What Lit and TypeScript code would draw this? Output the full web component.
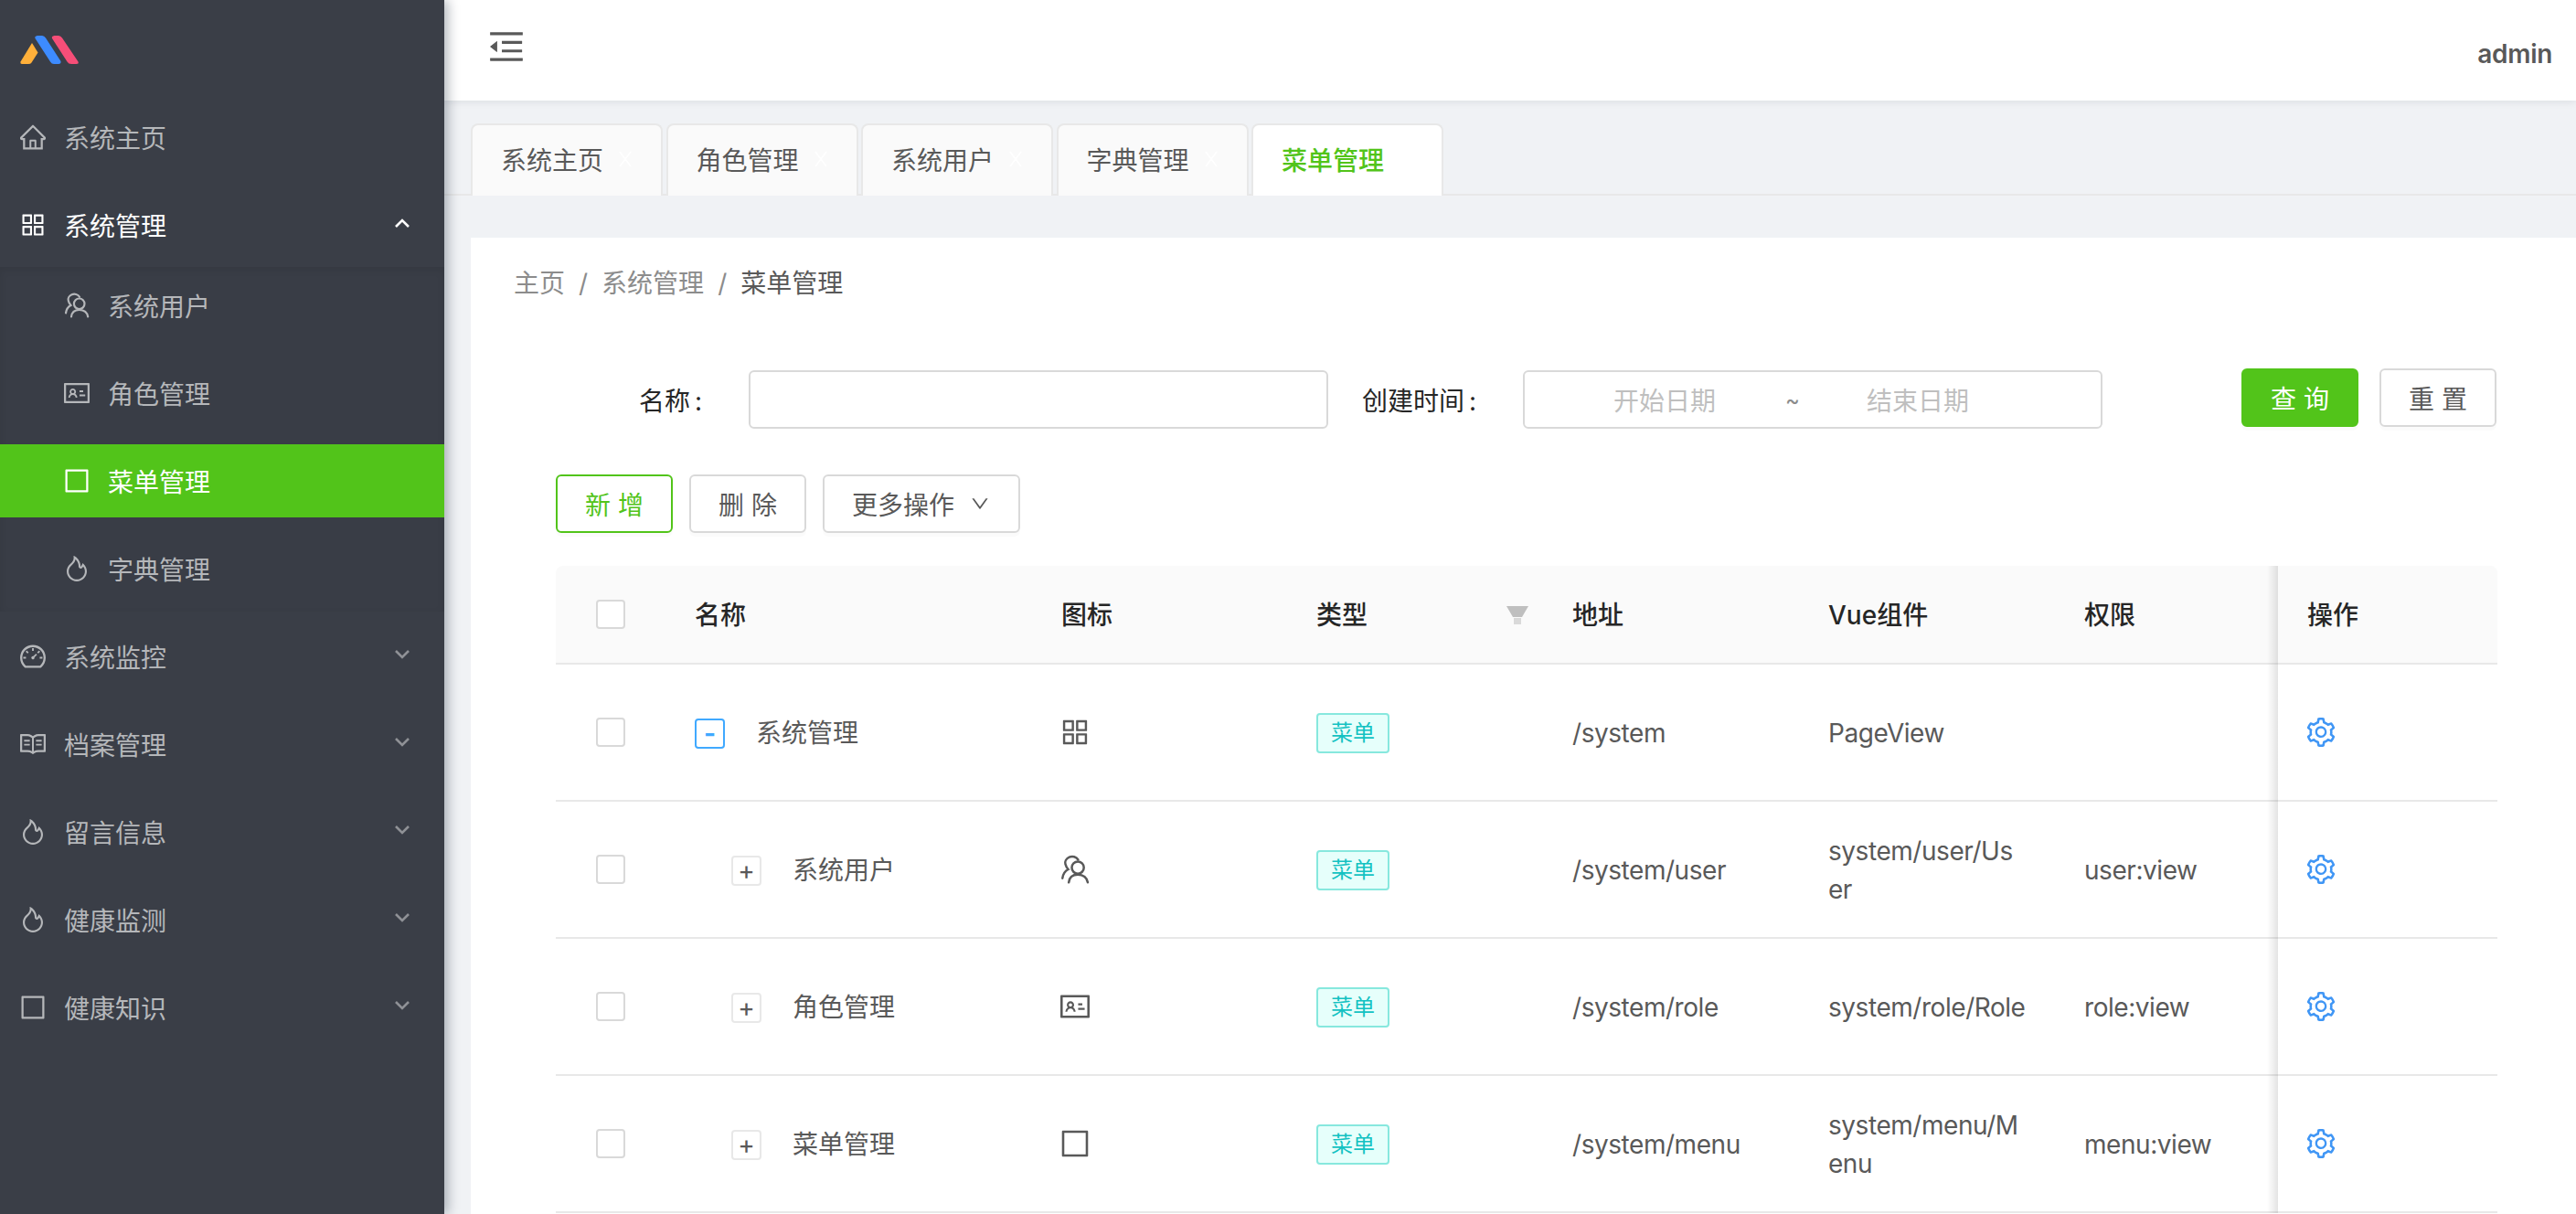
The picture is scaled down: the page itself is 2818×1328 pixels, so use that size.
import { LitElement, html, css, svg } from "lit";
import { customElement } from "lit/decorators.js";

// paths de los iconos (viewBox 64 64 896 896)
const P: Record<string, string> = {
  home: "M946.5 505L560.1 118.8l-25.9-25.9a31.5 31.5 0 0 0-44.4 0L77.5 505a63.9 63.9 0 0 0-18.8 46c.4 35.2 29.7 63.3 64.9 63.3h42.5V940h691.8V614.3h43.4c17.1 0 33.2-6.7 45.3-18.8a63.6 63.6 0 0 0 18.7-45.3c0-17-6.7-33.1-18.8-45.2zM568 868H456V664h112v204zm217.9-325.7V868H632V640c0-22.1-17.9-40-40-40H432c-22.1 0-40 17.9-40 40v228H238.1V542.3h-96l370-369.7 23.1 23.1L882 542.3h-96.1z",
  appstore: "M464 144H160c-8.8 0-16 7.2-16 16v304c0 8.8 7.2 16 16 16h304c8.8 0 16-7.2 16-16V160c0-8.8-7.2-16-16-16zm-52 268H212V212h200v200zm452-268H560c-8.8 0-16 7.2-16 16v304c0 8.8 7.2 16 16 16h304c8.8 0 16-7.2 16-16V160c0-8.8-7.2-16-16-16zm-52 268H612V212h200v200zM464 544H160c-8.8 0-16 7.2-16 16v304c0 8.8 7.2 16 16 16h304c8.8 0 16-7.2 16-16V560c0-8.8-7.2-16-16-16zm-52 268H212V612h200v200zm452-268H560c-8.8 0-16 7.2-16 16v304c0 8.8 7.2 16 16 16h304c8.8 0 16-7.2 16-16V560c0-8.8-7.2-16-16-16zm-52 268H612V612h200v200z",
  idcard: "M928 160H96c-17.7 0-32 14.3-32 32v640c0 17.7 14.3 32 32 32h832c17.7 0 32-14.3 32-32V192c0-17.7-14.3-32-32-32zm-40 632H136V232h752v560zM610.3 476h123.4c1.3 0 2.3-3.6 2.3-8v-48c0-4.4-1-8-2.3-8H610.3c-1.3 0-2.3 3.6-2.3 8v48c0 4.4 1 8 2.3 8zm4.8 144h185.7c3.9 0 7.1-3.6 7.1-8v-48c0-4.4-3.2-8-7.1-8H615.1c-3.9 0-7.1 3.6-7.1 8v48c0 4.4 3.2 8 7.1 8zM224 673h43.9c4.2 0 7.6-3.3 7.9-7.5 3.8-50.5 46-90.5 97.2-90.5s93.4 40 97.2 90.5c.3 4.2 3.7 7.5 7.9 7.5H522a8 8 0 0 0 8-8.4c-2.8-53.3-32-99.7-74.6-126.1a111.8 111.8 0 0 0 29.1-75.5c0-61.9-49.9-112-111.4-112s-111.4 50.1-111.4 112c0 29.1 11 55.5 29.1 75.5a158.09 158.09 0 0 0-74.6 126.1c-.4 4.6 3.2 8.4 7.8 8.4zm149-262c28.5 0 51.7 23.3 51.7 52s-23.2 52-51.7 52-51.7-23.3-51.7-52 23.2-52 51.7-52z",
  border: "M880 112H144c-17.7 0-32 14.3-32 32v736c0 17.7 14.3 32 32 32h736c17.7 0 32-14.3 32-32V144c0-17.7-14.3-32-32-32zm-40 728H184V184h656v656z",
  fire: "M834.1 469.2A347.49 347.49 0 0 0 751.2 354l-29.1-26.7a7.09 7.09 0 0 0-11.4 2.9l-13 37.3c-8.1 23.4-23 47.3-44.1 70.8-1.4 1.5-3 1.9-4.1 2-1.1.1-2.8-.1-4.3-1.5-1.4-1.2-2.1-3-2-4.8 3.7-60.2-14.3-128.1-53.7-202C555.3 171 510 123.1 453.4 89.7l-41.3-24.3c-5.4-3.2-12.3 1-12 7.3l2.2 48c1.5 32.8-2.3 61.8-11.3 85.9-11 29.5-26.8 56.9-47 81.5a295.64 295.64 0 0 1-47.5 46.1 352.6 352.6 0 0 0-100.3 121.5A347.75 347.75 0 0 0 160 610c0 47.2 9.3 92.9 27.7 136a349.4 349.4 0 0 0 75.5 110.9c32.4 32 70 57.2 111.9 74.7C418.5 949.8 464.5 959 512 959s93.5-9.2 136.9-27.3A348.6 348.6 0 0 0 760.8 857c32.4-32 57.8-69.4 75.5-110.9a344.2 344.2 0 0 0 27.7-136c0-48.8-10-96.2-29.9-140.9zM713 808.5c-53.7 53.2-125 82.4-201 82.4s-147.3-29.2-201-82.4c-53.5-53.1-83-123.5-83-198.4 0-43.5 9.8-85.2 29.1-124 18.8-37.9 46.8-71.8 80.8-97.9a349.6 349.6 0 0 0 58.6-56.8c25-30.5 44.6-64.5 58.2-101a240 240 0 0 0 12.1-46.5c24.1 22.2 44.3 49 61.2 80.4 33.4 62.6 48.8 118.3 45.8 165.7a74.01 74.01 0 0 0 24.4 59.8 73.36 73.36 0 0 0 53.4 18.8c19.7-1 37.8-9.7 51-24.4 13.3-14.9 24.8-30.1 34.4-45.6 14 17.9 25.7 37.4 35 58.4 15.9 35.8 24 73.9 24 113.2 0 74.9-29.5 145.4-83 198.4z",
  dashboard: "M924.8 385.6a446.7 446.7 0 0 0-96-142.4 446.7 446.7 0 0 0-142.4-96C631.1 123.8 572.5 112 512 112s-119.1 11.8-174.4 35.2a446.7 446.7 0 0 0-142.4 96 446.7 446.7 0 0 0-96 142.4C75.8 440.9 64 499.5 64 560c0 132.7 58.3 257.7 159.9 343.1l1.7 1.4c5.8 4.8 13.1 7.5 20.6 7.5h531.7c7.5 0 14.8-2.7 20.6-7.5l1.7-1.4C901.7 817.7 960 692.7 960 560c0-60.5-11.9-119.1-35.2-174.4zM761.4 836H262.6A371.12 371.12 0 0 1 140 560c0-99.4 38.7-192.8 109-263 70.3-70.3 163.7-109 263-109 99.4 0 192.8 38.7 263 109 70.3 70.3 109 163.7 109 263 0 105.6-44.5 205.5-122.6 276zM623.5 421.5a8.03 8.03 0 0 0-11.3 0L527.7 506c-18.7-5-39.4-.2-54.1 14.5a55.95 55.95 0 0 0 0 79.2 55.95 55.95 0 0 0 79.2 0 55.87 55.87 0 0 0 14.5-54.1l84.5-84.5c3.1-3.1 3.1-8.2 0-11.3l-28.3-28.3zM490 320h44c4.4 0 8-3.6 8-8v-80c0-4.4-3.6-8-8-8h-44c-4.4 0-8 3.6-8 8v80c0 4.4 3.6 8 8 8zm260 218v44c0 4.4 3.6 8 8 8h80c4.4 0 8-3.6 8-8v-44c0-4.4-3.6-8-8-8h-80c-4.4 0-8 3.6-8 8zm12.7-197.2l-31.1-31.1a8.03 8.03 0 0 0-11.3 0l-56.6 56.6a8.03 8.03 0 0 0 0 11.3l31.1 31.1c3.1 3.1 8.2 3.1 11.3 0l56.6-56.6c3.1-3.1 3.1-8.2 0-11.3zm-458.6-31.1a8.03 8.03 0 0 0-11.3 0l-31.1 31.1a8.03 8.03 0 0 0 0 11.3l56.6 56.6c3.1 3.1 8.2 3.1 11.3 0l31.1-31.1c3.1-3.1 3.1-8.2 0-11.3l-56.6-56.6zM262 530h-80c-4.4 0-8 3.6-8 8v44c0 4.4 3.6 8 8 8h80c4.4 0 8-3.6 8-8v-44c0-4.4-3.6-8-8-8z",
  read: "M928 161H699.2c-49.1 0-97.1 14.1-138.4 40.7L512 233l-48.8-31.3A255.2 255.2 0 0 0 324.8 161H96c-17.7 0-32 14.3-32 32v568c0 17.7 14.3 32 32 32h228.8c49.1 0 97.1 14.1 138.4 40.7l44.4 28.6c1.3.8 2.8 1.3 4.3 1.3s3-.4 4.3-1.3l44.4-28.6C602 807.1 650.1 793 699.2 793H928c17.7 0 32-14.3 32-32V193c0-17.7-14.3-32-32-32zM324.8 721H136V233h188.8c35.4 0 69.8 10.1 99.5 29.2l48.8 31.3 6.9 4.5v462c-47.6-25.6-100.8-39-155.2-39zm563.2 0H699.2c-54.4 0-107.6 13.4-155.2 39V298l6.9-4.5 48.8-31.3c29.7-19.1 64.1-29.2 99.5-29.2H888v488zM396.9 361H211.1c-3.9 0-7.1 3.4-7.1 7.5v45c0 4.1 3.2 7.5 7.1 7.5h185.7c3.9 0 7.1-3.4 7.1-7.5v-45c.1-4.1-3.1-7.5-7-7.5zm223.1 7.5v45c0 4.1 3.2 7.5 7.1 7.5h185.7c3.9 0 7.1-3.4 7.1-7.5v-45c0-4.1-3.2-7.5-7.1-7.5H627.1c-3.9 0-7.1 3.4-7.1 7.5zM396.9 501H211.1c-3.9 0-7.1 3.4-7.1 7.5v45c0 4.1 3.2 7.5 7.1 7.5h185.7c3.9 0 7.1-3.4 7.1-7.5v-45c.1-4.1-3.1-7.5-7-7.5zm416 0H627.1c-3.9 0-7.1 3.4-7.1 7.5v45c0 4.1 3.2 7.5 7.1 7.5h185.7c3.9 0 7.1-3.4 7.1-7.5v-45c.1-4.1-3.1-7.5-7-7.5z",
  setting: "M924.8 625.7l-65.5-56c3.1-19 4.7-38.4 4.7-57.8s-1.6-38.8-4.7-57.8l65.5-56a32.03 32.03 0 0 0 9.3-35.2l-.9-2.6a443.74 443.74 0 0 0-79.7-137.9l-1.8-2.1a32.12 32.12 0 0 0-35.1-9.5l-81.3 28.9c-30-24.6-63.5-44-99.7-57.6l-15.7-85a32.05 32.05 0 0 0-25.8-25.7l-2.7-.5c-52.1-9.4-106.9-9.4-159 0l-2.7.5a32.05 32.05 0 0 0-25.8 25.7l-15.8 85.4a351.86 351.86 0 0 0-99 57.4l-81.9-29.1a32 32 0 0 0-35.1 9.5l-1.8 2.1a446.02 446.02 0 0 0-79.7 137.9l-.9 2.6c-4.5 12.5-.8 26.5 9.3 35.2l66.3 56.6c-3.1 18.8-4.6 38-4.6 57.1 0 19.2 1.5 38.4 4.6 57.1L99 625.5a32.03 32.03 0 0 0-9.3 35.2l.9 2.6c18.1 50.4 44.9 96.9 79.7 137.9l1.8 2.1a32.12 32.12 0 0 0 35.1 9.5l81.9-29.1c29.8 24.5 63.1 43.9 99 57.4l15.8 85.4a32.05 32.05 0 0 0 25.8 25.7l2.7.5a449.4 449.4 0 0 0 159 0l2.7-.5a32.05 32.05 0 0 0 25.8-25.7l15.7-85a350 350 0 0 0 99.7-57.6l81.3 28.9a32 32 0 0 0 35.1-9.5l1.8-2.1c34.8-41.1 61.6-87.5 79.7-137.9l.9-2.6c4.5-12.3.8-26.3-9.3-35zM788.3 465.9c2.5 15.1 3.8 30.6 3.8 46.1s-1.3 31-3.8 46.1l-6.6 40.1 74.7 63.9a370.03 370.03 0 0 1-42.6 73.6L721 702.8l-31.4 25.8c-23.9 19.6-50.5 35-79.3 45.8l-38.1 14.3-17.9 97a377.5 377.5 0 0 1-85 0l-17.9-97.2-37.8-14.5c-28.5-10.8-55-26.2-78.7-45.7l-31.4-25.9-93.4 33.2c-17-22.9-31.2-47.6-42.6-73.6l75.5-64.5-6.5-40c-2.4-14.9-3.7-30.3-3.7-45.5 0-15.3 1.2-30.6 3.7-45.5l6.5-40-75.5-64.5c11.3-26.1 25.6-50.7 42.6-73.6l93.4 33.2 31.4-25.9c23.7-19.5 50.2-34.9 78.7-45.7l37.9-14.3 17.9-97.2c28.1-3.2 56.8-3.2 85 0l17.9 97 38.1 14.3c28.7 10.8 55.4 26.2 79.3 45.8l31.4 25.8 92.8-32.9c17 22.9 31.2 47.6 42.6 73.6L781.8 426l6.5 39.9zM512 326c-97.2 0-176 78.8-176 176s78.8 176 176 176 176-78.8 176-176-78.8-176-176-176zm79.2 255.2A111.6 111.6 0 0 1 512 614c-29.9 0-58-11.7-79.2-32.8A111.6 111.6 0 0 1 400 502c0-29.9 11.7-58 32.8-79.2C454 401.6 482.1 390 512 390c29.9 0 58 11.6 79.2 32.8A111.6 111.6 0 0 1 624 502c0 29.9-11.7 58-32.8 79.2z",
  fold: "M408 442h480c4.4 0 8-3.6 8-8v-56c0-4.4-3.6-8-8-8H408c-4.4 0-8 3.6-8 8v56c0 4.4 3.6 8 8 8zm-8 204c0 4.4 3.6 8 8 8h480c4.4 0 8-3.6 8-8v-56c0-4.4-3.6-8-8-8H408c-4.4 0-8 3.6-8 8v56zm504-486H120c-4.4 0-8 3.6-8 8v56c0 4.4 3.6 8 8 8h784c4.4 0 8-3.6 8-8v-56c0-4.4-3.6-8-8-8zm0 632H120c-4.4 0-8 3.6-8 8v56c0 4.4 3.6 8 8 8h784c4.4 0 8-3.6 8-8v-56c0-4.4-3.6-8-8-8zM115.4 518.9L271.7 642c5.8 4.6 14.4.5 14.4-6.9V388.9c0-7.4-8.5-11.5-14.4-6.9L115.4 505.1a8.83 8.83 0 0 0 0 13.8z",
  down: "M884 256h-75c-5.1 0-9.9 2.5-12.9 6.6L512 654.2 227.9 262.6c-3-4.1-7.8-6.6-12.9-6.6h-75c-6.5 0-10.3 7.4-6.5 12.7l352.6 486.1c12.8 17.6 39 17.6 51.7 0l352.6-486.1c3.9-5.3.1-12.7-6.4-12.7z",
};

// icono de dos personas, se dibuja con trazos
const team = svg`<g fill="none" stroke="currentColor" stroke-width="2.2" stroke-linecap="round">
  <circle cx="16.7" cy="12.3" r="5.8" />
  <path d="M8 26.5C8.500 22 11.500 19 16.700 19s8.700 3 9.500 7.500" />
  <path d="M17 4.800C15.300 2 11.500 1 8.500 2.300 5.500 3.700 4 6.500 4.800 9c.5 2 1.300 3.500 2.700 5C4.500 15.500 2.500 18.500 2 22.500" />
</g>`;

function icon(name: string, size = 28) {
  if (name === "team") {
    return html`<svg class="ic" width=${size} height=${size} viewBox="0 0 28 28">${team}</svg>`;
  }
  return html`<svg class="ic" width=${size} height=${size} viewBox="64 64 896 896" fill="currentColor"><path d=${P[name]} /></svg>`;
}

@customElement("app-sider")
export class AppSider extends LitElement {
  static styles = css`
    :host {
      display: block;
      width: 486px;
      flex: none;
      height: 100%;
      background: #3a3e47;
      color: #b5b7ba;
      position: relative;
      z-index: 2;
      box-shadow: 4px 0 12px rgba(0, 21, 41, 0.3);
      font-size: 28px;
    }
    .logo {
      height: 110px;
      box-sizing: border-box;
      padding: 39px 0 0 22px;
    }
    .logo svg {
      display: block;
    }
    .item {
      display: flex;
      align-items: center;
      height: 80px;
      padding-left: 22px;
      padding-right: 38px;
      margin-bottom: 16px;
    }
    .item .ic {
      margin-right: 20px;
      flex: none;
    }
    .item.open {
      color: #fff;
      margin-bottom: 6px;
    }
    .sub {
      background: #393d46;
      box-shadow: inset 0 3px 8px rgba(0, 0, 0, 0.08);
      padding: 2px 0 7px;
      margin-bottom: 9px;
    }
    .sub .item {
      padding-left: 70px;
    }
    .sub .item:last-child {
      margin-bottom: 0;
    }
    .item.active {
      background: #52c41a;
      color: #fff;
    }
    .label {
      flex: 1;
    }
    .arrow {
      flex: none;
      width: 16px;
      height: 10px;
      margin-top: -4px;
      color: #8f9196;
    }
    .open .arrow {
      color: #fff;
    }
  `;

  menu = [
    { label: "系统主页", ic: "home" },
    {
      label: "系统管理",
      ic: "appstore",
      open: true,
      children: [
        { label: "系统用户", ic: "team" },
        { label: "角色管理", ic: "idcard" },
        { label: "菜单管理", ic: "border", active: true },
        { label: "字典管理", ic: "fire" },
      ],
    },
    { label: "系统监控", ic: "dashboard", more: true },
    { label: "档案管理", ic: "read", more: true },
    { label: "留言信息", ic: "fire", more: true },
    { label: "健康监测", ic: "fire", more: true },
    { label: "健康知识", ic: "border", more: true },
  ];

  render() {
    return html`
      <div class="logo">
        <svg width="65" height="32" viewBox="0 0 65 32">
          <path fill="#ffb03a" d="M.5 28.5 13 8l6.5 10.5-7 11Q11.5 31 9 31H2Q0 31 .5 28.5Z" />
          <path fill="#3d8bff" d="M16.5 3Q15.5.5 19 0h5q2.500 0 4 2.500L44.500 28q.5 3-2.500 3h-5q-2.500 0-4-2.500Z" />
          <path fill="#f64e78" d="M35 3Q34 .5 37.500 0H42q2.500 0 4 2.500L63.500 28.500Q64.500 31 61.500 31H56q-3 0-4.500-2.500Z" />
        </svg>
      </div>
      ${this.menu.map(
        (m) => html`
          <div class="item ${m.open ? "open" : ""}">
            ${icon(m.ic)}
            <span class="label">${m.label}</span>
            ${m.open || m.more
              ? html`<svg class="arrow" viewBox="0 0 16 10" fill="none" stroke="currentColor" stroke-width="2.600">
                  <path d=${m.open ? "M1 9l7-7 7 7" : "M1 1l7 7 7-7"} />
                </svg>`
              : ""}
          </div>
          ${m.children
            ? html`<div class="sub">
                ${m.children.map(
                  (c) => html`
                    <div class="item ${c.active ? "active" : ""}">
                      ${icon(c.ic)}<span class="label">${c.label}</span>
                    </div>
                  `
                )}
              </div>`
            : ""}
        `
      )}
    `;
  }
}

@customElement("app-table")
export class AppTable extends LitElement {
  static styles = css`
    :host {
      display: block;
      font-size: 28px;
      line-height: 42px;
      color: #595959;
    }
    .row {
      display: grid;
      grid-template-columns: 120px 401px 279px 280px 280px 280px 244px 240px;
      border-bottom: 2px solid #e8e8e8;
      height: 150px;
      box-sizing: border-box;
    }
    .row.head {
      height: 108px;
      background: #fafafa;
      border-radius: 8px 8px 0 0;
      color: #262626;
      font-weight: 500;
    }
    .cell {
      display: flex;
      align-items: center;
      padding: 2px 32px 0;
      box-sizing: border-box;
      min-width: 0;
    }
    .cell.check {
      justify-content: center;
      padding: 0;
    }
    .cell.glyph {
      padding-top: 0;
      padding-left: 31px;
    }
    .cell.latin {
      letter-spacing: -0.45px;
      white-space: pre-line;
    }
    .cell.type {
      justify-content: space-between;
      padding-right: 16px;
    }
    /* columna fija con sombra a la izquierda */
    .cell.ops {
      background: #fff;
      color: #4096f5;
      position: relative;
    }
    .cell.ops::before {
      content: "";
      position: absolute;
      left: -12px;
      width: 12px;
      top: 0;
      bottom: -2px;
      background: linear-gradient(to left, rgba(0, 0, 0, 0.11), transparent);
    }
    .head .cell.ops {
      background: #fafafa;
      color: #262626;
      border-radius: 0 8px 0 0;
    }
    .box {
      width: 32px;
      height: 32px;
      box-sizing: border-box;
      border: 2px solid #d9d9d9;
      border-radius: 4px;
      background: #fff;
    }
    .expand {
      width: 33px;
      height: 33px;
      flex: none;
      box-sizing: border-box;
      border: 2px solid #e8e8e8;
      border-radius: 4px;
      background: #fff;
      margin-right: 34px;
      display: flex;
      align-items: center;
      justify-content: center;
      font-size: 28px;
      line-height: 1;
    }
    .expand.child {
      margin-left: 40px;
    }
    .expand.on {
      border-color: #40a9ff;
      color: #40a9ff;
      font-weight: 700;
    }
    .tag {
      display: inline-block;
      width: 80px;
      height: 44px;
      box-sizing: border-box;
      text-align: center;
      border: 2px solid #87e8de;
      border-radius: 4px;
      background: #e6fffb;
      color: #13c2c2;
      font-size: 24px;
      line-height: 40px;
    }
    .filter {
      flex: none;
      display: block;
    }
  `;

  rows = [
    { name: "系统管理", ic: "appstore", path: "/system", comp: "PageView", perm: "", root: true },
    { name: "系统用户", ic: "team", path: "/system/user", comp: "system/user/Us\ner", perm: "user:view" },
    { name: "角色管理", ic: "idcard", path: "/system/role", comp: "system/role/Role", perm: "role:view" },
    { name: "菜单管理", ic: "border", path: "/system/menu", comp: "system/menu/M\nenu", perm: "menu:view" },
  ];

  render() {
    return html`
      <div class="row head">
        <div class="cell check"><span class="box"></span></div>
        <div class="cell">名称</div>
        <div class="cell">图标</div>
        <div class="cell type">
          类型
          <svg class="filter" width="24" height="20" viewBox="0 0 24 20">
            <path fill="#bfbfbf" d="M0 0h24l-7 12H7Z" />
            <path fill="#d9d9d9" d="M8 13h8v7H8Z" />
          </svg>
        </div>
        <div class="cell">地址</div>
        <div class="cell">Vue组件</div>
        <div class="cell">权限</div>
        <div class="cell ops">操作</div>
      </div>
      ${this.rows.map(
        (r) => html`
          <div class="row">
            <div class="cell check"><span class="box"></span></div>
            <div class="cell">
              ${r.root
                ? html`<span class="expand on">-</span>`
                : html`<span class="expand child">+</span>`}
              ${r.name}
            </div>
            <div class="cell glyph">${icon(r.ic, 32)}</div>
            <div class="cell"><span class="tag">菜单</span></div>
            <div class="cell latin">${r.path}</div>
            <div class="cell latin"><span>${r.comp}</span></div>
            <div class="cell latin">${r.perm}</div>
            <div class="cell ops glyph">${icon("setting", 32)}</div>
          </div>
        `
      )}
    `;
  }
}

@customElement("app-root")
export class AppRoot extends LitElement {
  static styles = css`
    :host {
      display: flex;
      width: 100%;
      height: 100vh;
      overflow: hidden;
      background: #f0f2f5;
      font-family: Inter, "Noto Sans CJK SC", "Liberation Sans", sans-serif;
      font-size: 28px;
      color: #595959;
    }
    .main {
      flex: 1;
      min-width: 0;
      display: flex;
      flex-direction: column;
    }
    .header {
      height: 110px;
      flex: none;
      background: #fff;
      box-shadow: 0 2px 8px rgba(0, 21, 41, 0.08);
      display: flex;
      justify-content: space-between;
      padding: 31px 26px 0 48px;
      box-sizing: border-box;
      color: #595959;
      position: relative;
    }
    .user {
      font-weight: 600;
      letter-spacing: -0.3px;
      line-height: 56px;
    }
    .tabs {
      display: flex;
      gap: 3.5px;
      padding: 25px 0 0 29px;
      height: 104px;
      box-sizing: border-box;
      border-bottom: 2px solid #e8e8e8;
      flex: none;
    }
    .tab {
      width: 210px;
      height: 79px;
      box-sizing: border-box;
      border: 2px solid #e8e8e8;
      border-bottom: none;
      border-radius: 8px 8px 0 0;
      background: #fafafa;
      padding: 0 0 3px 31px;
      display: flex;
      align-items: center;
      gap: 15px;
      flex: none;
    }
    .tab.active {
      background: #fff;
      color: #52c41a;
      font-weight: 500;
    }
    .tab svg {
      color: #fff;
      display: block;
    }
    .card {
      flex: 1;
      margin: 46px 0 0 29px;
      background: #fff;
      padding: 29px 86px 0 47px;
      min-height: 0;
      overflow: hidden;
    }
    .crumb {
      display: flex;
      line-height: 42px;
      color: #8c8c8c;
    }
    .crumb i {
      font-style: normal;
      margin: 0 15px;
      color: #8c8c8c;
    }
    .crumb b {
      font-weight: 400;
      color: #595959;
    }
    .form {
      display: flex;
      align-items: center;
      margin: 72px 0 0 46px;
      color: #262626;
    }
    .form label {
      flex: none;
      text-align: right;
      margin-right: 51px;
    }
    .form label span {
      margin-left: 5px;
    }
    .form label.l1 {
      width: 160px;
    }
    .form label.l2 {
      width: 162px;
    }
    .input {
      flex: none;
      width: 634px;
      height: 64px;
      box-sizing: border-box;
      border: 2px solid #d9d9d9;
      border-radius: 6px;
      background: #fff;
    }
    .input.range {
      display: grid;
      grid-template-columns: 262px 18px 256px;
      align-items: center;
      text-align: center;
      color: #bfbfbf;
      padding-left: 22px;
    }
    .input.range span:nth-child(2) {
      color: #8c8c8c;
      font-size: 24px;
    }
    .btns {
      display: flex;
      gap: 23px;
      margin-left: auto;
      margin-bottom: 4px;
      margin-right: 1px;
    }
    .btn {
      height: 64px;
      box-sizing: border-box;
      border: 2px solid #d9d9d9;
      border-radius: 6px;
      background: #fff;
      color: #595959;
      padding: 0 32px 0 30px;
      display: flex;
      align-items: center;
      gap: 18px;
      box-shadow: 0 4px 0 rgba(0, 0, 0, 0.015);
      flex: none;
    }
    .btn.primary {
      background: #52c41a;
      border-color: #52c41a;
      color: #fff;
    }
    .btn.outline {
      border-color: #52c41a;
      color: #52c41a;
    }
    .btn.w {
      width: 128px;
      padding: 0;
      justify-content: center;
    }
    .actions {
      display: flex;
      gap: 18px;
      margin: 48px 0 36px 46px;
    }
    .wrap {
      margin-left: 46px;
    }
  `;

  tabs = ["系统主页", "角色管理", "系统用户", "字典管理", "菜单管理"];

  render() {
    return html`
      <app-sider></app-sider>
      <div class="main">
        <div class="header">
          ${icon("fold", 40)}
          <span class="user">admin</span>
        </div>
        <div class="tabs">
          ${this.tabs.map(
            (t, i) => html`
              <div class="tab ${i === 4 ? "active" : ""}">
                ${t}
                <svg width="18" height="18" viewBox="0 0 18 18" fill="none" stroke="currentColor" stroke-width="1.600">
                  <path d="M3 1l12 16M15 1L3 17" />
                </svg>
              </div>
            `
          )}
        </div>
        <div class="card">
          <div class="crumb">
            <span>主页</span><i>/</i><span>系统管理</span><i>/</i><b>菜单管理</b>
          </div>
          <div class="form">
            <label class="l1">名称<span>:</span></label>
            <div class="input"></div>
            <label class="l2">创建时间<span>:</span></label>
            <div class="input range"><span>开始日期</span><span>~</span><span>结束日期</span></div>
            <div class="btns">
              <div class="btn primary w">查 询</div>
              <div class="btn w">重 置</div>
            </div>
          </div>
          <div class="actions">
            <div class="btn outline w">新 增</div>
            <div class="btn w">删 除</div>
            <div class="btn">更多操作${icon("down", 20)}</div>
          </div>
          <div class="wrap"><app-table></app-table></div>
        </div>
      </div>
    `;
  }
}
